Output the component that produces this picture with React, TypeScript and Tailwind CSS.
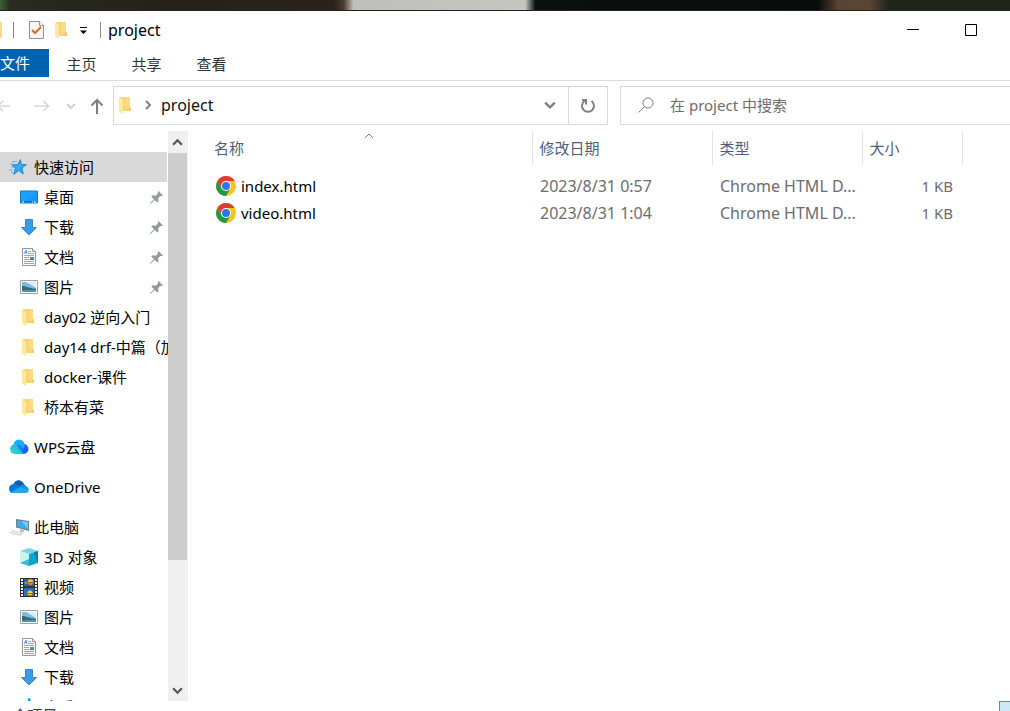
import { useState } from "react";
import type { ReactNode } from "react";

function Folder() {
  return (
    <svg width="18" height="18" viewBox="0 0 18 18" className="shrink-0">
      <path d="M3 1h10v10l1 1v3H6z" fill="#f7d477" />
      <path d="M9 1h4v10H8z" fill="#fbdc82" />
      <path d="M12 11l2 1v3h-2z" fill="#f2cb69" />
      <path d="M2 1l4 3v13l-1 1-3-3z" fill="#ffe7a0" />
    </svg>
  );
}

function Star() {
  return (
    <svg width="18" height="18" viewBox="0 0 18 18" className="shrink-0">
      <path d="M11.500 1.500l.8 5 5 .2-4.300 3.200 1.200 6-4.500-3.300-5 3.800 1.600-5.900L3 7l5.600-.4z" fill="#35a8f0" stroke="#1b83c9" strokeWidth=".9" />
      <path d="M3 3.500h5M1 6h4M2 9h3M0 12h4M2 14.500h2" stroke="#5fb3e6" strokeWidth="1" />
    </svg>
  );
}

function Desktop() {
  return (
    <svg width="18" height="18" viewBox="0 0 18 18" className="shrink-0">
      <path d="M.5 3h17v12H.5z" fill="#1ba1fb" stroke="#1478bd" />
      <path d="M17 3.500v9L5 14z" fill="#159af4" />
      <path d="M1 13.500h16" stroke="#0a6cb5" />
      <path d="M2 14h2M12 14h1M14 14h2" stroke="#fff" />
    </svg>
  );
}

function Download() {
  return (
    <svg width="18" height="18" viewBox="0 0 18 18" className="shrink-0">
      <path d="M5.500 1.500h7v8h4L9 17 1.500 9.500h4z" fill="#3c9be9" stroke="#2c80c9" strokeWidth=".9" />
    </svg>
  );
}

function Documents() {
  return (
    <svg width="18" height="18" viewBox="0 0 18 18" className="shrink-0">
      <path d="M2.500.500h10l3 3v14h-13z" fill="#fff" stroke="#979797" />
      <path d="M12.500.500v3h3" fill="#eee" stroke="#979797" />
      <path d="M4 6l2-4 1 4M5 4.500h2" fill="none" stroke="#2f9be0" strokeWidth=".9" />
      <path d="M8 3.500h3M8 5.500h6M4 7.500h10" stroke="#6ebae6" />
      <path d="M4 9.500h5M4 11.500h5M4 13.500h10M4 15.500h10" stroke="#a2a2a2" />
      <path d="M10 9h4v3h-4z" fill="#4c93bd" />
      <path d="M10 12l2-1 2 1z" fill="#285f61" />
    </svg>
  );
}

function Pictures() {
  return (
    <svg width="18" height="18" viewBox="0 0 18 18" className="shrink-0">
      <path d="M.5 2.500h17v13H.5z" fill="#fff" stroke="#a0a0a0" />
      <path d="M2 4h14v10H2z" fill="#78b9ee" />
      <path d="M6 4h10v6z" fill="#d6effc" />
      <path d="M2 8c4 0 6 2 14 3v1H2z" fill="#35705f" />
      <path d="M2 12h14v2H2z" fill="#4f8fc0" />
    </svg>
  );
}

function WpsCloud() {
  return (
    <svg width="20" height="18" viewBox="0 0 20 18" className="shrink-0">
      <defs>
        <linearGradient id="wps" x1="0" y1="1" x2="1" y2="0">
          <stop offset="0" stopColor="#35e3b5" />
          <stop offset="1" stopColor="#1aa2fb" />
        </linearGradient>
      </defs>
      <circle cx="14.500" cy="11" r="5" fill="#1466ea" />
      <circle cx="10" cy="7" r="5.500" fill="#19aefa" />
      <path d="M11 15.500L5 11l5-5 5 5z" fill="#1684f2" />
      <path d="M5 6.500c3 0 3.500 2 5 4s3 4 5 5.500H5.500a4.800 4.800 0 01-.5-9.500z" fill="url(#wps)" />
    </svg>
  );
}

function OneDriveCloud() {
  return (
    <svg width="20" height="18" viewBox="0 0 20 18" className="shrink-0">
      <path d="M4 8C5 1 13 0 15.500 7l-3 4z" fill="#0a5fb0" />
      <path d="M4 6c3-1 5 1 8 3.500L2.500 15C-1 13 -1 7 4 6z" fill="#0f78d2" />
      <path d="M11 9c2-2.500 5-3 6-.5 4 1 3.500 6.500 0 6.500H4l-1.500-1z" fill="#28a5ea" />
      <path d="M11 9c2-2.500 5-3 6-.5 1.500.5 2.200 1.500 2.400 3z" fill="#1490df" />
    </svg>
  );
}

function Computer() {
  return (
    <svg width="20" height="18" viewBox="0 0 20 18" className="shrink-0">
      <path d="M7 1l13 2v10L7 9.500z" fill="#737f88" />
      <path d="M8 2.300l11 1.800v7.500L8 8.500z" fill="#39adf3" />
      <path d="M12 3l7 1.100v7z" fill="#73c8fa" />
      <path d="M11 11l4 1v2h-4z" fill="#b7bfc5" />
      <path d="M4 12l11 3-4 3L0 15z" fill="#d3d9dd" />
      <path d="M2 14l9 2.500M4 13l9 2.500" stroke="#f5f7f8" strokeWidth=".7" />
    </svg>
  );
}

function Cube() {
  return (
    <svg width="18" height="18" viewBox="0 0 18 18" className="shrink-0">
      <path d="M0 3l9-3 9 3-9 3z" fill="#75d5e4" />
      <path d="M0 3l9 3v12l-9-3z" fill="#c9f1f0" />
      <path d="M9 6l9-3v12l-9 3z" fill="#0ba5cd" />
      <path d="M0 15l9-4v7z" fill="#35bfd0" />
      <path d="M14 4.300L18 3v12z" fill="#087eae" />
    </svg>
  );
}

function Video() {
  return (
    <svg width="18" height="19" viewBox="0 0 18 19" className="shrink-0">
      <path d="M0 0h18v19H0z" fill="#303030" />
      <path d="M4 1h10v8H4z" fill="#315fae" />
      <path d="M4 10h10v8H4z" fill="#3b68bd" />
      <path d="M2 1v17M16 1v17" stroke="#eee" strokeWidth="2" strokeDasharray="2 1" />
      <circle cx="10.500" cy="4" r="2.800" fill="#ebc52b" />
      <path d="M8 4h5v1.500H8z" fill="#cf483a" />
      <circle cx="6" cy="5" r="1.300" fill="#89a343" />
      <circle cx="10" cy="15" r="2.500" fill="#f0d32b" />
      <path d="M8 15h5v1H8z" fill="#cf483a" />
      <path d="M4 8h10v1H4z" fill="#294638" />
    </svg>
  );
}

function Music() {
  return (
    <svg width="18" height="18" viewBox="0 0 18 18" className="shrink-0">
      <path d="M8 0h2c0 4 5 4 5 8l-5-3v8a3.500 3 0 11-2-2z" fill="#1ba1ed" />
    </svg>
  );
}

function Pin() {
  return (
    <svg width="13" height="13" viewBox="0 0 13 13" className="shrink-0">
      <path d="M8.500 0L13 4.500l-1.500.7-1.300-.2-2 2.200.3 3-1.200 1.300L4.700 9 1 12.500 0 13l.5-1.200L4 8.200 1.300 5.500l1.300-1.200 3.200.4L7.900 2.600l-.2-1.300z" fill="#8f9aa3" />
    </svg>
  );
}

function Chrome() {
  return (
    <svg width="20" height="20" viewBox="0 0 20 20" className="shrink-0">
      <circle cx="10" cy="10" r="10" fill="#fcc31e" />
      <path d="M1.340 5A10 10 0 0118.660 5H10L5.670 12.500z" fill="#e33b2e" />
      <path d="M1.340 5A10 10 0 0010 20l4.330-7.500H5.670z" fill="#219a48" />
      <circle cx="10" cy="10" r="5" fill="#fff" />
      <circle cx="10" cy="10" r="4" fill="#2b78ed" />
    </svg>
  );
}

function Chevron({ d, size = 10, width = 2 }: { d: string; size?: number; width?: number }) {
  return (
    <svg width={size} height={size} viewBox="0 0 10 10" fill="none" stroke="currentColor" strokeWidth={width} className="shrink-0">
      <path d={d} />
    </svg>
  );
}

const UP = "M1 7l4-4 4 4";
const DOWN = "M1 3l4 4 4-4";
const RIGHT = "M3 1l4 4-4 4";

type Item = { label: string; icon: ReactNode; pinned?: boolean };
type Group = { label: string; icon: ReactNode; active?: boolean; items: Item[] };

const groups: Group[] = [
  {
    label: "快速访问",
    icon: <Star />,
    active: true,
    items: [
      { label: "桌面", icon: <Desktop />, pinned: true },
      { label: "下载", icon: <Download />, pinned: true },
      { label: "文档", icon: <Documents />, pinned: true },
      { label: "图片", icon: <Pictures />, pinned: true },
      { label: "day02 逆向入门", icon: <Folder /> },
      { label: "day14 drf-中篇（加餐）", icon: <Folder /> },
      { label: "docker-课件", icon: <Folder /> },
      { label: "桥本有菜", icon: <Folder /> },
    ],
  },
  { label: "WPS云盘", icon: <WpsCloud />, items: [] },
  { label: "OneDrive", icon: <OneDriveCloud />, items: [] },
  {
    label: "此电脑",
    icon: <Computer />,
    items: [
      { label: "3D 对象", icon: <Cube /> },
      { label: "视频", icon: <Video /> },
      { label: "图片", icon: <Pictures /> },
      { label: "文档", icon: <Documents /> },
      { label: "下载", icon: <Download /> },
      { label: "音乐", icon: <Music /> },
    ],
  },
];

const files = [
  { name: "index.html", date: "2023/8/31 0:57", type: "Chrome HTML D...", size: "1 KB" },
  { name: "video.html", date: "2023/8/31 1:04", type: "Chrome HTML D...", size: "1 KB" },
];

function TitleBar() {
  return (
    <header className="flex h-[38px] shrink-0 items-center">
      <span className="h-4 w-[2px] bg-[#fbdc82]" />
      <span className="ml-[11px] h-4 w-px bg-[#8a8a8a]" />
      <button aria-label="属性" className="ml-[15px]">
        <svg width="15" height="18" viewBox="0 0 15 18">
          <path d="M.5.500h10l4 4v13H.5z" fill="#f8f8f8" stroke="#8d9297" />
          <path d="M10.500.500v4h4" fill="#fff" stroke="#8d9297" />
          <path d="M3 9l3 3 6-6" fill="none" stroke="#ef5f22" strokeWidth="2" />
        </svg>
      </button>
      <button aria-label="新建文件夹" className="ml-[9px]"><Folder /></button>
      <button aria-label="自定义快速访问工具栏" className="ml-[9px] pt-[2px]">
        <svg width="7" height="8" viewBox="0 0 7 8"><path d="M0 .5h7" stroke="#000" /><path d="M0 3.500h7L3.500 7z" /></svg>
      </button>
      <span className="ml-[13px] h-4 w-px bg-[#8a8a8a]" />
      <h1 className="ml-[7px] flex-1 text-[16px]">project</h1>
      <button aria-label="最小化" className="flex h-full w-[58px] items-center justify-center">
        <svg width="12" height="12"><path d="M0 5.500h12" stroke="#000" /></svg>
      </button>
      <button aria-label="最大化" className="mr-[10px] flex h-full w-[58px] items-center justify-center">
        <svg width="12" height="12"><path d="M.5.500h11v11H.5z" fill="none" stroke="#000" /></svg>
      </button>
    </header>
  );
}

function AddressBar() {
  return (
    <div className="flex shrink-0 items-center pt-[5px] pb-[6px] text-[#808080]">
      <button aria-label="后退" className="text-[#d6d6d6]">
        <svg width="10" height="14" viewBox="0 0 10 14" fill="none" stroke="currentColor" strokeWidth="1.500"><path d="M10 7H0M3 2L-2 7l5 5" /></svg>
      </button>
      <button aria-label="前进" className="ml-6 text-[#d6d6d6]">
        <svg width="16" height="14" viewBox="0 0 16 14" fill="none" stroke="currentColor" strokeWidth="1.500"><path d="M0 7h14M9.500 2l5 5-5 5" /></svg>
      </button>
      <button aria-label="最近的位置" className="ml-4 text-[#d0d0d0]"><Chevron d={DOWN} /></button>
      <button aria-label="上移" className="ml-[14px]">
        <svg width="14" height="16" viewBox="0 0 14 16" fill="none" stroke="currentColor" strokeWidth="2"><path d="M7 16V2M1.500 7.500L7 2l5.500 5.500" /></svg>
      </button>
      <div className="ml-[9px] flex h-[39px] flex-[490] items-center border border-[#d9d9d9] pb-[2px] pl-[3px]">
        <Folder />
        <span className="ml-[8px] flex"><Chevron d={RIGHT} /></span>
        <button className="ml-[8px] flex-1 text-left text-[16px] text-[#111]">project</button>
        <button aria-label="以前的位置" className="px-[12px]"><Chevron d={DOWN} size={12} /></button>
        <button aria-label="刷新" className="-mb-[2px] flex w-[39px] items-center justify-center self-stretch border-l border-[#d9d9d9]">
          <svg width="16" height="16" viewBox="0 0 16 16" fill="none" stroke="currentColor" strokeWidth="2">
            <path d="M11.500 3a6 6 0 11-7 0" />
            <path d="M2 2h4v4.500" />
          </svg>
        </button>
      </div>
      <label className="ml-3 flex h-[39px] flex-[372] items-center border border-r-0 border-[#d9d9d9] pb-[2px] pl-[17px]">
        <svg width="16" height="16" viewBox="0 0 16 16" fill="none" stroke="currentColor"><circle cx="10" cy="6" r="5" /><path d="M6.500 9.500L.5 15.500" /></svg>
        <input aria-label="搜索" placeholder="在 project 中搜索" className="ml-4 min-w-0 flex-1 text-[15px] outline-none placeholder:text-[#6d6d6d]" />
      </label>
    </div>
  );
}

function Sidebar() {
  return (
    <aside className="flex w-[191px] shrink-0 border-r border-[#f7f7f7]">
      <nav className="w-[168px] overflow-hidden pt-[21px]">
        {groups.map((group) => (
          <div key={group.label} className="mb-[10px]">
            <button className={`flex h-[30px] w-[167px] items-center text-left ${group.active ? "bg-[#d9d9d9]" : ""}`}>
              <span className="ml-[9px] flex w-[25px]">{group.icon}</span>
              {group.label}
            </button>
            {group.items.map((item) => (
              <button key={item.label} className="flex h-[30px] w-full items-center pl-5 text-left whitespace-nowrap">
                {item.icon}
                <span className="ml-[6px] flex-1">{item.label}</span>
                {item.pinned && <span className="mr-[5px]"><Pin /></span>}
              </button>
            ))}
          </div>
        ))}
      </nav>
      <div className="flex w-5 flex-col bg-[#f0f0f0] pr-px text-[#555]">
        <button aria-label="向上滚动" className="flex h-[22px] items-center justify-center"><Chevron d={UP} size={11} /></button>
        <div className="flex-[408] bg-[#cdcdcd]" />
        <div className="flex-[119]" />
        <button aria-label="向下滚动" className="flex h-[22px] items-center justify-center"><Chevron d={DOWN} size={11} /></button>
      </div>
    </aside>
  );
}

function FileTable() {
  return (
    <main className="min-w-0 flex-1 overflow-hidden pl-[15px]">
      <table className="w-[756px] table-fixed border-collapse text-left">
        <colgroup>
          <col className="w-[326px]" />
          <col className="w-[180px]" />
          <col className="w-[150px]" />
          <col className="w-[100px]" />
        </colgroup>
        <thead>
          <tr className="h-[34px] text-[#4c607a]">
            {["名称", "修改日期", "类型", "大小"].map((title, i) => (
              <th key={title} className="relative border-r border-[#e3e3e3] pl-[7px] font-normal first:pl-2">
                <button>{title}</button>
                {i === 0 && <span className="absolute top-0 left-[158px] text-[#777]"><Chevron d={UP} width={1} /></span>}
              </th>
            ))}
          </tr>
        </thead>
        <tbody className="text-[#6d6d6d] before:block before:h-[7px]">
          {files.map((file) => (
            <tr key={file.name} className="h-[27px]">
              <td className="pl-[10px]">
                <button className="flex items-center gap-[5px] text-black"><Chrome />{file.name}</button>
              </td>
              <td className="pl-2 text-[16px]">{file.date}</td>
              <td className="pl-2 text-[16px] whitespace-nowrap">{file.type}</td>
              <td className="pr-[9px] text-right">{file.size}</td>
            </tr>
          ))}
        </tbody>
      </table>
    </main>
  );
}

export default function App() {
  const [tab, setTab] = useState("文件");

  return (
    <div className="flex h-screen flex-col overflow-hidden bg-white font-['Noto_Sans','Noto_Sans_CJK_SC',sans-serif] text-[15px] leading-[22px] text-black">
      {/* strip of the desktop wallpaper above the window */}
      <div className="h-[11px] shrink-0 border-b border-[#29201d] bg-[linear-gradient(90deg,#3c6335_0%,#292a20_1%,#252219_15%,#29231b_33%,#493a2d_34%,#bdbfba_35%,#c4c6bf_52%,#0a100d_53%,#080c0b_81%,#594333_83%,#5b4634_86%,#20251a_88%,#20251a_100%)]" />
      <TitleBar />
      <div className="flex h-8 shrink-0 items-start border-b border-[#dadbdc]">
        {["文件", "主页", "共享", "查看"].map((name) => (
          <button
            key={name}
            onClick={() => setTab(name)}
            className={`h-7 ${name === "文件" ? "w-[49px] text-left" : "w-[65px] pt-[2px]"} ${tab === name ? "bg-[#0063b1] text-white" : "text-[#333]"}`}
          >
            {name}
          </button>
        ))}
      </div>
      <AddressBar />
      <div className="flex min-h-0 flex-1">
        <Sidebar />
        <FileTable />
      </div>
      <footer className="flex h-[10px] shrink-0 justify-between overflow-hidden text-[#2b4260]">
        <span className="pt-[3px]">2 个项目</span>
        <button aria-label="详细信息" className="h-6 w-[11px] border-t border-l border-[#2f98d6] bg-[#cce8f7] pt-[6px] pl-[5px]">
          <span className="block h-3 w-3 border border-[#888] bg-white" />
        </button>
      </footer>
    </div>
  );
}
